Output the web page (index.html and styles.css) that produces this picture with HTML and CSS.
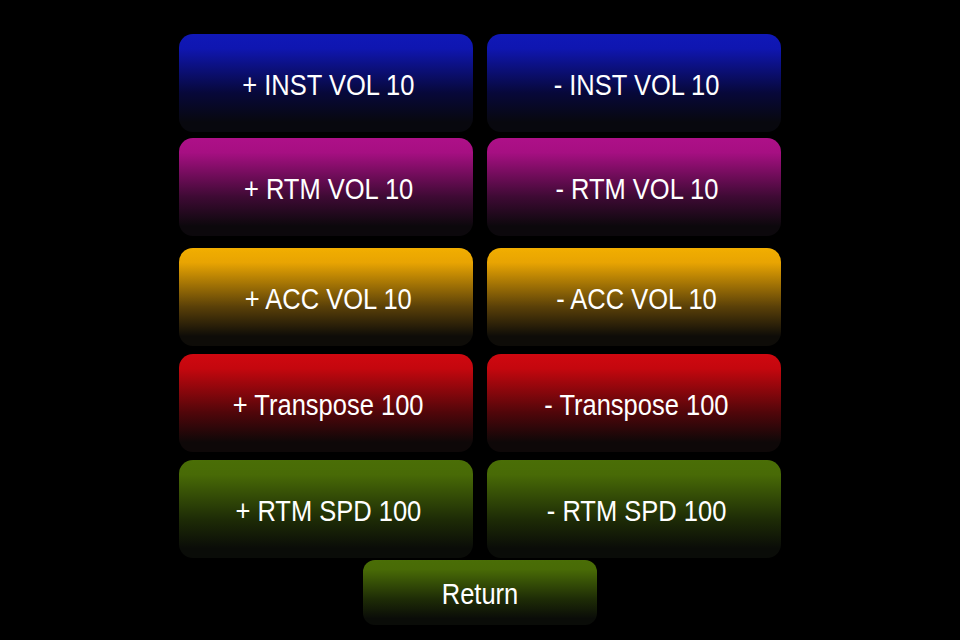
FILE: index.html
```html
<!DOCTYPE html>
<html lang="en">
<head>
  <meta charset="UTF-8">
  <title>Controls</title>
  <link rel="stylesheet" href="styles.css">
</head>
<body>
  <div class="painel">
    <div class="linha linha-1">
      <button class="botao azul"><span>+ INST VOL 10</span></button>
      <button class="botao azul"><span>- INST VOL 10</span></button>
    </div>
    <div class="linha linha-2">
      <button class="botao magenta"><span>+ RTM VOL 10</span></button>
      <button class="botao magenta"><span>- RTM VOL 10</span></button>
    </div>
    <div class="linha linha-3">
      <button class="botao laranja"><span>+ ACC VOL 10</span></button>
      <button class="botao laranja"><span>- ACC VOL 10</span></button>
    </div>
    <div class="linha linha-4">
      <button class="botao vermelho"><span>+ Transpose 100</span></button>
      <button class="botao vermelho"><span>- Transpose 100</span></button>
    </div>
    <div class="linha linha-5">
      <button class="botao verde"><span>+ RTM SPD 100</span></button>
      <button class="botao verde"><span>- RTM SPD 100</span></button>
    </div>
    <div class="linha linha-return">
      <button class="botao verde voltar"><span>Return</span></button>
    </div>
  </div>
</body>
</html>
```

FILE: styles.css
```css
/* Fundo preto */
body {
  margin: 0;
  padding: 0;
  background-color: #000;
  font-family: 'Liberation Sans', Arial, sans-serif;
}

.painel {
  width: 602px;
  margin: 0 auto;
  padding-top: 34px;
  display: flex;
  flex-direction: column;
}

.linha {
  display: flex;
  gap: 14px;
  justify-content: center;
}

.linha-2 { margin-top: 6px; }
.linha-3 { margin-top: 12px; }
.linha-4 { margin-top: 8px; }
.linha-5 { margin-top: 8px; }
.linha-return { margin-top: 2px; }

/* Botões */
.botao {
  width: 294px;
  height: 98px;
  border: none;
  border-radius: 14px;
  padding: 3px 0 0 5px;
  color: #fff;
  font-family: inherit;
  font-size: 30px;
  cursor: pointer;
}

/* texto estreito, como a fonte condensada original */
.botao span {
  display: inline-block;
  transform: scaleX(0.85);
  white-space: nowrap;
}

.voltar {
  width: 234px;
  height: 65px;
  border-radius: 12px;
  padding-left: 0;
}

.azul {
  background: linear-gradient(to bottom, #1018b8 0%, #0f16b0 15%, #07083a 60%, #08080e 90%);
}

.magenta {
  background: linear-gradient(to bottom, #ae1088 0%, #a60f82 15%, #3e0a34 60%, #0c080c 90%);
}

.laranja {
  background: linear-gradient(to bottom, #f2ae00 0%, #e8a402 15%, #5a4008 60%, #0e0c08 90%);
}

.vermelho {
  background: linear-gradient(to bottom, #d00810 0%, #c4070e 15%, #50060a 60%, #0e0808 90%);
}

.verde {
  background: linear-gradient(to bottom, #4a6e06 0%, #486a06 15%, #1e2c06 60%, #0a0c08 90%);
}
```
